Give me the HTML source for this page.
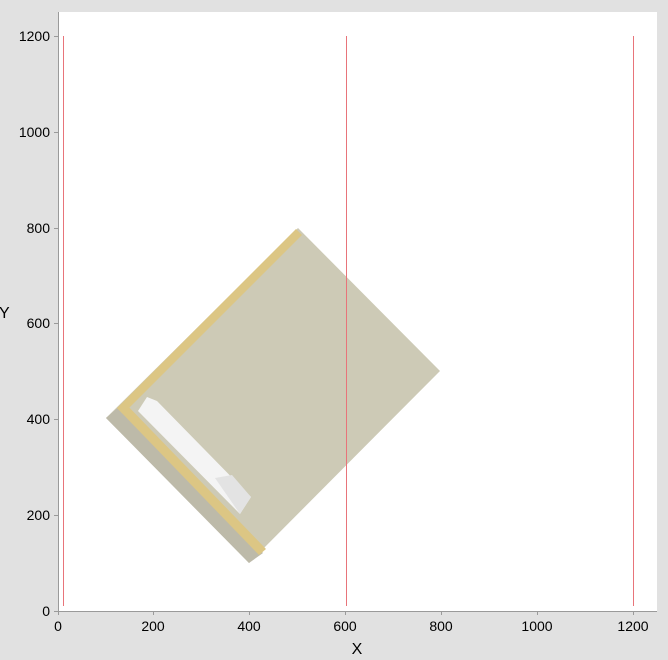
<!DOCTYPE html>
<html><head><style>
html,body{margin:0;padding:0;background:#e1e1e1;width:668px;height:660px;overflow:hidden;font-family:"Liberation Sans",sans-serif;}
</style></head><body>
<svg width="668" height="660" xmlns="http://www.w3.org/2000/svg" font-family="Liberation Sans, sans-serif" font-size="14" fill="#000">
<rect x="58" y="12" width="599" height="599" fill="#fff"/>
<polygon points="298,228 440,371 249,563 106,418" fill="#cdcab6"/>
<polygon points="106,418 122,404 263,553 249,563" fill="#bdbaa9"/>
<polygon points="117,408 296,229 302,235 123,414" fill="#dcc684"/>
<polygon points="117,408 124,402 266,549 259,555" fill="#dcc684"/>
<polygon points="147,397 157,401 251,497 240,514 138,411" fill="#f4f4f4"/>
<polygon points="215,478 232,475 251,497 240,514" fill="#e3e3e3"/>
<rect x="63" y="36" width="1" height="570" fill="#e8747a"/>
<rect x="346" y="36" width="1" height="570" fill="#e8747a"/>
<rect x="633" y="36" width="1" height="570" fill="#e8747a"/>
<g stroke="#9a9a9a" stroke-width="1">
<line x1="58.5" y1="12" x2="58.5" y2="615"/>
<line x1="54" y1="611.5" x2="657" y2="611.5"/>
<line x1="54" y1="36.5" x2="58" y2="36.5"/>
<line x1="54" y1="132.5" x2="58" y2="132.5"/>
<line x1="54" y1="228.5" x2="58" y2="228.5"/>
<line x1="54" y1="323.5" x2="58" y2="323.5"/>
<line x1="54" y1="419.5" x2="58" y2="419.5"/>
<line x1="54" y1="515.5" x2="58" y2="515.5"/>
<line x1="153.5" y1="611" x2="153.5" y2="615"/>
<line x1="249.5" y1="611" x2="249.5" y2="615"/>
<line x1="345.5" y1="611" x2="345.5" y2="615"/>
<line x1="441.5" y1="611" x2="441.5" y2="615"/>
<line x1="537.5" y1="611" x2="537.5" y2="615"/>
<line x1="633.5" y1="611" x2="633.5" y2="615"/>
</g>
<g text-anchor="end">
<text x="50" y="41">1200</text>
<text x="50" y="137">1000</text>
<text x="50" y="233">800</text>
<text x="50" y="328">600</text>
<text x="50" y="424">400</text>
<text x="50" y="520">200</text>
<text x="50" y="616">0</text>
</g>
<g text-anchor="middle">
<text x="58" y="631">0</text>
<text x="153" y="631">200</text>
<text x="249" y="631">400</text>
<text x="345" y="631">600</text>
<text x="441" y="631">800</text>
<text x="537" y="631">1000</text>
<text x="633" y="631">1200</text>
</g>
<text x="357" y="654" text-anchor="middle" font-size="16">X</text>
<text x="-1" y="318" font-size="16">Y</text>
</svg>
</body></html>
